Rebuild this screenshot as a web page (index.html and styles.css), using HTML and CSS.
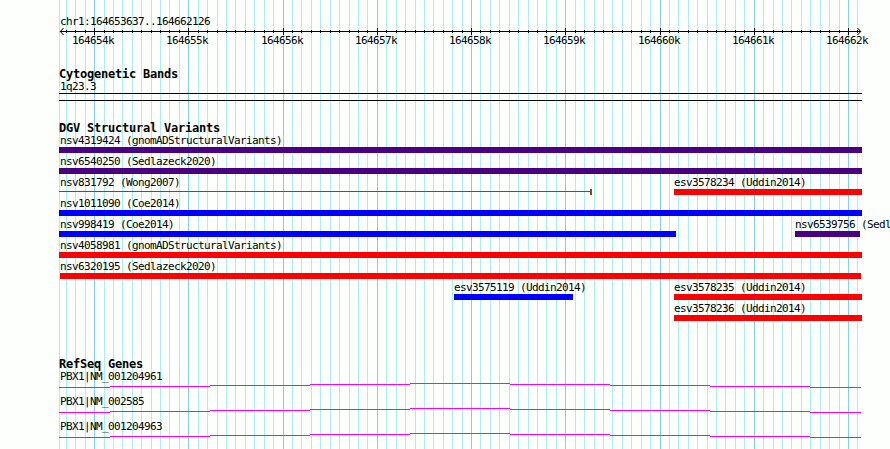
FILE: index.html
```
<!DOCTYPE html>
<html>
  <head>
    <meta charset="UTF-8">
    <title>chr1:164653637..164662126</title>
    <link rel="stylesheet" href="styles.css">
  </head>

  <body>
    <div class="browser">
      <svg class="grid" id="grid" width="890" height="449" shape-rendering="crispEdges"></svg>

      <div class="ruler">
        <p class="label">chr1:164653637..164662126</p>
        <svg class="axis" id="axis" width="831" height="20">
          <path class="axis-line" d="M1 4.5H802" />
          <path class="arrow" d="M4.5 1L1.3 4.5L4.5 8M798.5 1L801.7 4.5L798.5 8" />
        </svg>
      </div>

      <div class="track cytoband">
        <h2>Cytogenetic Bands</h2>
        <p class="label">1q23.3</p>
        <div class="band"></div>
      </div>

      <div class="track variants">
        <h2>DGV Structural Variants</h2>
        <div class="row">
          <div class="feature" style="width: 803px"><p class="label">nsv4319424 (gnomADStructuralVariants)</p><div class="bar complex"></div></div>
        </div>
        <div class="row">
          <div class="feature" style="width: 803px"><p class="label">nsv6540250 (Sedlazeck2020)</p><div class="bar complex"></div></div>
        </div>
        <div class="row">
          <div class="feature" style="width: 533px"><p class="label">nsv831792 (Wong2007)</p><div class="bar span"></div></div>
          <div class="feature inner" style="margin-left: 82px; width: 188px"><p class="label">esv3578234 (Uddin2014)</p><div class="bar loss"></div></div>
        </div>
        <div class="row">
          <div class="feature" style="width: 803px"><p class="label">nsv1011090 (Coe2014)</p><div class="bar gain"></div></div>
        </div>
        <div class="row">
          <div class="feature" style="width: 617px"><p class="label">nsv998419 (Coe2014)</p><div class="bar gain"></div></div>
          <div class="feature inner" style="margin-left: 119px; width: 65px"><p class="label">nsv6539756 (Sedl</p><div class="bar complex"></div></div>
        </div>
        <div class="row">
          <div class="feature" style="width: 803px"><p class="label">nsv4058981 (gnomADStructuralVariants)</p><div class="bar loss"></div></div>
        </div>
        <div class="row">
          <div class="feature inner" style="margin-left: 1px; width: 801px"><p class="label">nsv6320195 (Sedlazeck2020)</p><div class="bar loss"></div></div>
        </div>
        <div class="row">
          <div class="feature inner" style="margin-left: 395px; width: 119px"><p class="label">esv3575119 (Uddin2014)</p><div class="bar gain"></div></div>
          <div class="feature inner" style="margin-left: 101px; width: 188px"><p class="label">esv3578235 (Uddin2014)</p><div class="bar loss"></div></div>
        </div>
        <div class="row">
          <div class="feature inner" style="margin-left: 615px; width: 188px"><p class="label">esv3578236 (Uddin2014)</p><div class="bar loss"></div></div>
        </div>
      </div>

      <div class="track genes">
        <h2>RefSeq Genes</h2>
        <div class="gene">
          <p class="label">PBX1|NM_001204961</p>
          <svg class="intron" width="802" height="5"></svg>
        </div>
        <div class="gene">
          <p class="label">PBX1|NM_002585</p>
          <svg class="intron" width="802" height="5"></svg>
        </div>
        <div class="gene">
          <p class="label">PBX1|NM_001204963</p>
          <svg class="intron" width="802" height="5"></svg>
        </div>
      </div>
    </div>

    <script type="text/javascript">
      const svgNS = "http://www.w3.org/2000/svg";
      const left = 59;
      const step = 9.4237; // pixels per 100 bp

      function add(parent, name, attrs, text) {
        let node = document.createElementNS(svgNS, name);
        for (let key in attrs) {
          node.setAttribute(key, attrs[key]);
        }
        if (text) node.textContent = text;
        parent.appendChild(node);
      }

      let grid = document.getElementById("grid");
      let axis = document.getElementById("axis");

      add(grid, "rect", {class: "minor", x: left, y: 0, width: 1, height: 449});
      for (let i = -3; i <= 81; i++) {
        let x = Math.floor(94.6 + i * step);
        let major = i % 10 == 0;
        add(grid, "rect", {class: major ? "major" : "minor", x: x, y: 0, width: 1, height: 449});
        add(axis, "rect", {x: x - left, y: major ? 1 : 3, width: 1, height: major ? 7 : 3});
        if (major) {
          add(axis, "text", {x: x - left - 22, y: 17}, (164654 + i / 10) + "k");
        }
      }

      // introns rise to the middle of the gene and fall again, one pixel per step
      let introns = document.getElementsByClassName("intron");
      for (let i = 0; i < introns.length; i++) {
        for (let n = 0; n < 9; n++) {
          let start = n == 0 ? 0 : n * 100 - 49;
          let end = Math.min(n * 100 + 51, 802);
          add(introns[i], "rect", {x: start, y: Math.abs(n - 4), width: end - start, height: 1});
        }
      }
    </script>
  </body>
</html>
```
FILE: styles.css
```
* {
  margin: 0;
  padding: 0;
  box-sizing: border-box;
}

body {
  background-color: #fdfffc;
  color: #000;
  font-family: "DejaVu Sans Mono", monospace;
  font-size: 11px;
  overflow: hidden;
}

svg {
  display: block;
}

.browser {
  position: relative;
  width: 890px;
  height: 449px;
  padding: 15px 0 0 59px;
  overflow: hidden;
}

/* guide lines lie under all the tracks */
.grid {
  position: absolute;
  top: 0;
  left: 0;
  z-index: -1;
}

.minor {
  fill: #afeeee;
}

.major {
  fill: #87ceeb;
}

.label,
.axis text {
  font-size: 11px;
  letter-spacing: -0.622px;
}

.label {
  height: 12px;
  line-height: 14px;
  padding-left: 1px;
  white-space: nowrap;
}

h2 {
  height: 14px;
  font-size: 12px;
  line-height: 14px;
  letter-spacing: -0.225px;
  white-space: nowrap;
}

.ruler {
  height: 52px;
}

.axis-line,
.arrow {
  fill: none;
  stroke: #000;
  stroke-width: 1;
}

.cytoband {
  height: 54px;
}

.cytoband .label {
  margin-top: -1px;
}

.band {
  width: 803px;
  height: 8px;
  margin-top: 1px;
  border-top: 1px solid #000;
  border-bottom: 1px solid #000;
}

.variants {
  height: 236px;
}

.variants h2 {
  margin-bottom: -1px;
}

.row {
  display: flex;
  height: 21px;
}

.feature {
  flex: none;
}

.inner .label {
  padding-left: 0;
}

.bar {
  height: 6px;
  margin-top: 1px;
}

.gain {
  background-color: #0000ff;
}

.loss {
  background-color: #ff0000;
}

.complex {
  background-color: #4b0082;
}

.span {
  background: linear-gradient(#8b4513, #8b4513) 0 2px / 100% 1px no-repeat;
  border-right: 2px solid #8b4513;
}

.gene {
  height: 25px;
}

.genes h2 {
  margin-bottom: -1px;
}

.intron {
  margin-top: 1px;
  fill: #ff00ff;
}
```
